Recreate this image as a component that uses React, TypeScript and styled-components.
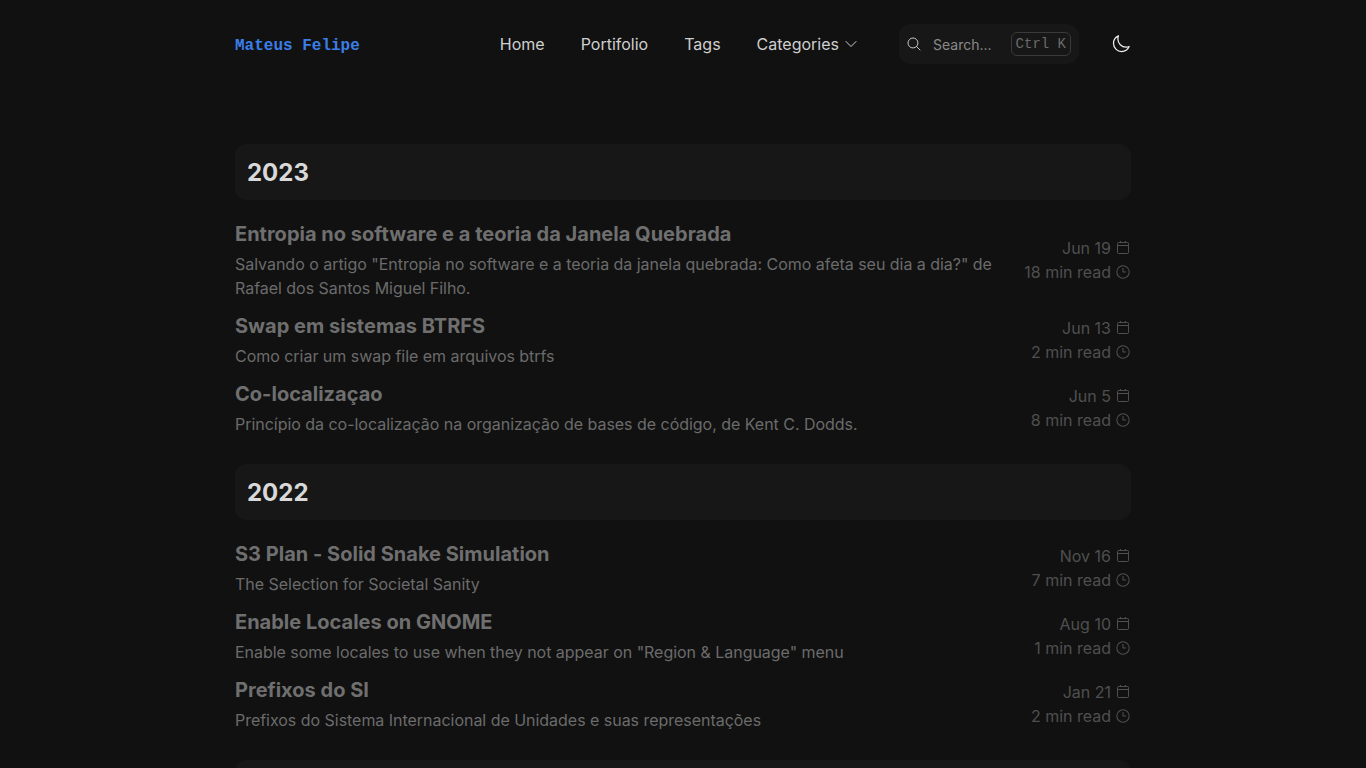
import React from "react";
import styled, { createGlobalStyle } from "styled-components";

const Global = createGlobalStyle`
  html, body { margin: 0; padding: 0; background: #111111; }
  body { font-family: Inter, "Noto Sans", sans-serif; color: #ededed; overflow: hidden; height: 768px; }
  * { box-sizing: border-box; }
`;

const Page = styled.div`
  width: 896px;
  margin: 0 auto;
`;

const Header = styled.header`
  display: flex;
  align-items: center;
  height: 88px;
`;

const Logo = styled.a`
  font-family: "Liberation Mono", monospace;
  font-weight: 700;
  font-size: 16px;
  color: #3b7ee8;
  margin-right: auto;
  line-height: 24px;
  padding-top: 3px;
`;

const Nav = styled.nav`
  display: flex;
  align-items: center;
  gap: 36px;
`;

const NavLink = styled.a`
  display: flex;
  align-items: center;
  gap: 4px;
  font-size: 16px;
  line-height: 24px;
  color: #cfcfcf;
`;

const SearchBox = styled.div`
  display: flex;
  align-items: center;
  width: 180px;
  height: 40px;
  margin-left: 40px;
  padding: 0 8px 0 7px;
  border-radius: 12px;
  background: #171717;
`;

const SearchLabel = styled.span`
  font-size: 14px;
  line-height: 20px;
  margin-left: 11px;
  margin-right: auto;
  padding-top: 2px;
  color: #8a8a8a;
`;

const Kbd = styled.kbd`
  display: flex;
  align-items: center;
  height: 24px;
  padding: 0 4px;
  border: 1px solid #3a3a3a;
  border-radius: 6px;
  font-family: "Liberation Mono", monospace;
  font-size: 14px;
  color: #6b6b6b;
`;

const ThemeButton = styled.button`
  display: flex;
  align-items: center;
  justify-content: center;
  width: 20px;
  height: 20px;
  margin-left: 32px;
  padding: 0;
  background: none;
  border: 0;
  color: #ededed;
`;

const Main = styled.main`
  padding-top: 56px;
`;

const Section = styled.section`
  display: flex;
  flex-direction: column;
  gap: 12px;
  margin-bottom: 28px;
`;

const Year = styled.h2`
  margin: 0 0 8px;
  height: 56px;
  padding: 2px 12px 0;
  display: flex;
  align-items: center;
  border-radius: 12px;
  background: #171717;
  font-size: 24px;
  line-height: 32px;
  font-weight: 700;
  color: #d9d9d9;
`;

const Item = styled.article`
  display: flex;
  align-items: center;
  justify-content: space-between;
  gap: 28px;
`;

const Body = styled.div`
  display: flex;
  flex-direction: column;
  gap: 4px;
  min-width: 0;
`;

const Title = styled.h3`
  margin: 0;
  font-size: 20px;
  line-height: 28px;
  font-weight: 700;
  letter-spacing: 0.01px;
  color: #6f6f6f;
`;

const Desc = styled.p`
  margin: 0;
  font-size: 16px;
  line-height: 24px;
  letter-spacing: -0.03px;
  color: #6b6b6b;
`;

const Meta = styled.div`
  flex: none;
  display: flex;
  flex-direction: column;
  align-items: flex-end;
`;

const MetaRow = styled.div`
  display: flex;
  align-items: center;
  gap: 4px;
  font-size: 16px;
  line-height: 24px;
  color: #4f4f4f;
  white-space: nowrap;
`;

const Icon = ({ d, size = 16, strokeWidth = 1.5, color = "currentColor" }: { d: string; size?: number; strokeWidth?: number; color?: string }) => (
  <svg width={size} height={size} viewBox="0 0 24 24" fill="none" stroke={color} strokeWidth={strokeWidth} strokeLinecap="round" strokeLinejoin="round">
    <path d={d} />
  </svg>
);

const CalendarIcon = () => (
  <svg width={16} height={16} viewBox="0 0 16 16" fill="none" stroke="currentColor" strokeWidth={1}>
    <rect x="2.5" y="2.5" width="11" height="11" rx="1" />
    <path d="M2.5 5.5h11M5.5 1v1.5M10.5 1v1.5" />
  </svg>
);

const ClockIcon = () => (
  <svg width={16} height={16} viewBox="0 0 16 16" fill="none" stroke="currentColor" strokeWidth={1.05}>
    <circle cx="8" cy="8" r="6.2" />
    <path d="M8 4v4h3" />
  </svg>
);

const paths = {
  chevron: "M19.5 8.25l-7.5 7.5-7.5-7.5",
  search: "M21 21l-5.197-5.197m0 0A7.5 7.5 0 105.196 5.196a7.5 7.5 0 0010.607 10.607z",
  moon: "M21.752 15.002A9.718 9.718 0 0118 15.75c-5.385 0-9.75-4.365-9.75-9.75 0-1.33.266-2.597.748-3.752A9.753 9.753 0 003 11.25C3 16.635 7.365 21 12.75 21a9.753 9.753 0 009.002-5.998z",
};

const data = [
  {
    year: "2023",
    posts: [
      { t: "Entropia no software e a teoria da Janela Quebrada", d: 'Salvando o artigo "Entropia no software e a teoria da janela quebrada: Como afeta seu dia a dia?" de Rafael dos Santos Miguel Filho.', date: "Jun 19", read: "18 min read" },
      { t: "Swap em sistemas BTRFS", d: "Como criar um swap file em arquivos btrfs", date: "Jun 13", read: "2 min read" },
      { t: "Co-localizaçao", d: "Princípio da co-localização na organização de bases de código, de Kent C. Dodds.", date: "Jun 5", read: "8 min read" },
    ],
  },
  {
    year: "2022",
    posts: [
      { t: "S3 Plan - Solid Snake Simulation", d: "The Selection for Societal Sanity", date: "Nov 16", read: "7 min read" },
      { t: "Enable Locales on GNOME", d: 'Enable some locales to use when they not appear on "Region & Language" menu', date: "Aug 10", read: "1 min read" },
      { t: "Prefixos do SI", d: "Prefixos do Sistema Internacional de Unidades e suas representações", date: "Jan 21", read: "2 min read" },
    ],
  },
  { year: "", posts: [] },
];

export default function App() {
  return (
    <Page>
      <Global />
      <Header>
        <Logo>Mateus Felipe</Logo>
        <Nav>
          <NavLink>Home</NavLink>
          <NavLink>Portifolio</NavLink>
          <NavLink>Tags</NavLink>
          <NavLink>
            Categories <Icon d={paths.chevron} />
          </NavLink>
        </Nav>
        <SearchBox>
          <Icon d={paths.search} color="#c4c4c4" />
          <SearchLabel>Search...</SearchLabel>
          <Kbd>Ctrl K</Kbd>
        </SearchBox>
        <ThemeButton>
          <Icon d={paths.moon} size={20} />
        </ThemeButton>
      </Header>
      <Main>
        {data.map((s, i) => (
          <Section key={i}>
            <Year>{s.year}</Year>
            {s.posts.map((p) => (
              <Item key={p.t}>
                <Body>
                  <Title>{p.t}</Title>
                  <Desc>{p.d}</Desc>
                </Body>
                <Meta>
                  <MetaRow>
                    {p.date} <CalendarIcon />
                  </MetaRow>
                  <MetaRow>
                    {p.read} <ClockIcon />
                  </MetaRow>
                </Meta>
              </Item>
            ))}
          </Section>
        ))}
      </Main>
    </Page>
  );
}
